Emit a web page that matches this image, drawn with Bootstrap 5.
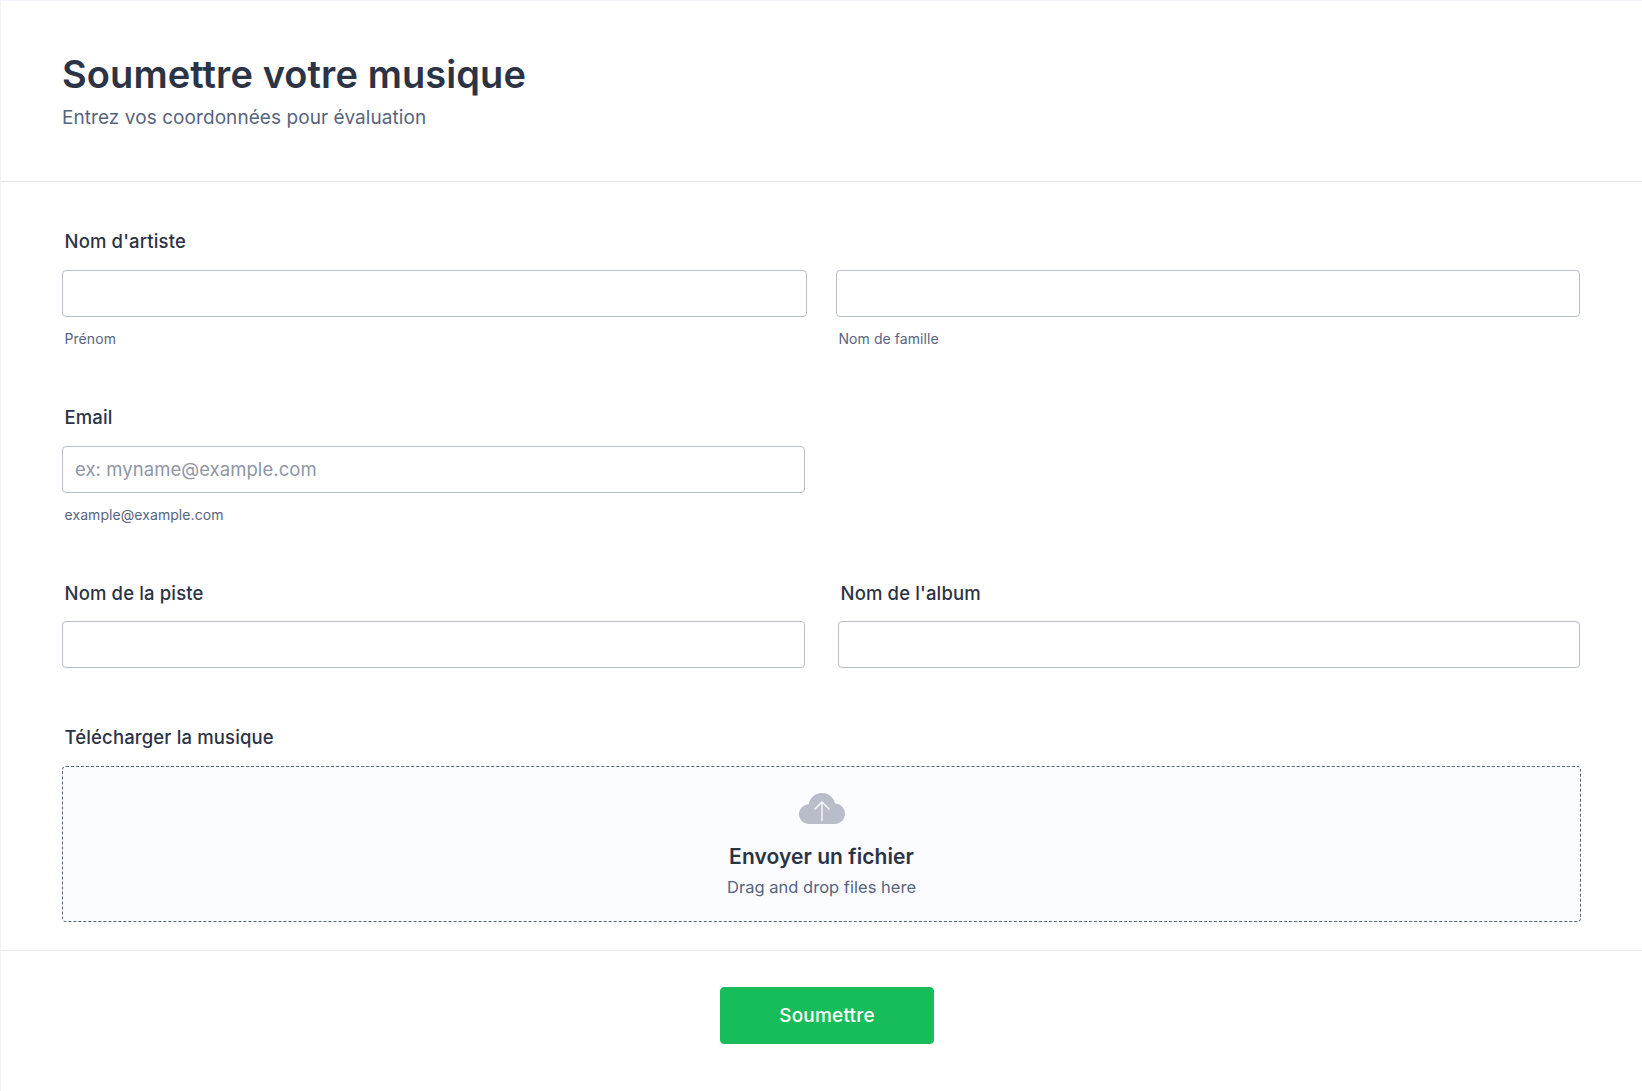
<!DOCTYPE html>
<html lang="fr">
<head>
<meta charset="utf-8">
<title>Soumettre votre musique</title>
<link href="https://cdn.jsdelivr.net/npm/bootstrap@5.3.0/dist/css/bootstrap.min.css" rel="stylesheet">
<style>
html,body{height:100%}
body{font-family:Inter,"Liberation Sans",sans-serif;color:#2c3345;background:#fff;font-optical-sizing:none}
.sheet{min-height:1091px;border-left:1px solid #f0f1f6;border-top:1px solid #f3f3fe;padding-top:0}
.head-block{height:181px;padding:49px 61px 0 61px;border-bottom:1px solid #dfe1ea}
.form-title{font-size:38px;line-height:48px;font-weight:600;letter-spacing:.09px;color:#2c3345;margin:0}
.form-sub{font-size:19px;line-height:24px;letter-spacing:.07px;color:#57647e;margin:8px 0 0}
.form-body{padding:0 61px;height:769px;border-bottom:1px solid #eaebf2}
.field-label{font-size:18.500px;line-height:24px;font-weight:450;letter-spacing:.14px;color:#2c3345;padding-left:2.500px;margin:0 0 17px}
.field-hint{font-size:14px;line-height:18px;letter-spacing:.07px;color:#57647e;padding-left:2.500px;margin:13px 0 0}
.text-field{display:block;width:100%;height:47px;border:1px solid #b8bdcc;border-radius:4px;padding:0 12px 2px;font-size:18.500px;letter-spacing:.06px;color:#2c3345;background:#fff;font-family:inherit;outline:none}
.text-field::placeholder{color:#8f96a6}
.first-group{padding-top:47px}
.email-group{padding-top:57px}
.music-group{padding-top:57px}
.music-group .field-label{margin-bottom:16px}
.upload-group{padding-top:57px}
.col-a1{width:745px}.col-b1{width:744px;margin-left:29px}
.col-a2{width:743px}.col-b2{width:742px;margin-left:33px}
.upload-zone{height:156px;border:1px dashed #57647e;border-radius:4px;background:#fbfcff;padding-top:26px}
.upload-zone svg{display:block}
.upload-title{font-size:21px;line-height:28px;font-weight:600;letter-spacing:.06px;color:#2c3345;margin:18px 0 0}
.upload-text{font-size:16.500px;line-height:22px;letter-spacing:.02px;color:#57647e;margin:5px 0 0}
.send-btn{width:214px;height:57px;background:#18bd5b;border:1px solid #18bd5b;border-radius:4px;color:#fff;font-size:19px;font-weight:450;letter-spacing:.2px;padding:2px 0 0}
.send-btn:hover{background:#18bd5b;border-color:#18bd5b;color:#fff}
.foot-block{padding:36px 0 0 719px}
</style>
</head>
<body>
<main class="sheet">
  <header class="head-block">
    <h1 class="form-title">Soumettre votre musique</h1>
    <p class="form-sub">Entrez vos coordonnées pour évaluation</p>
  </header>
  <form class="form-body" onsubmit="return false">
    <div class="first-group">
      <label class="field-label d-block">Nom d'artiste</label>
      <div class="d-flex">
        <div class="col-a1"><input class="text-field" type="text"><div class="field-hint">Prénom</div></div>
        <div class="col-b1"><input class="text-field" type="text"><div class="field-hint">Nom de famille</div></div>
      </div>
    </div>
    <div class="email-group">
      <label class="field-label d-block">Email</label>
      <div class="col-a2"><input class="text-field" type="email" placeholder="ex: myname@example.com"><div class="field-hint">example@example.com</div></div>
    </div>
    <div class="music-group d-flex">
      <div class="col-a2"><label class="field-label d-block">Nom de la piste</label><input class="text-field" type="text"></div>
      <div class="col-b2"><label class="field-label d-block">Nom de l'album</label><input class="text-field" type="text"></div>
    </div>
    <div class="upload-group">
      <label class="field-label d-block">Télécharger la musique</label>
      <div class="upload-zone text-center">
        <svg class="mx-auto" width="46" height="32" viewBox="0 0 46 32" aria-hidden="true">
          <path fill="#b8bdc9" d="M23 0c6.6 0 11.8 4.4 12.9 10.2C41.500 10.800 46 14.900 46 20.500 46 26.900 41.300 31 35.500 31H10.500C4.700 31 0 26.700 0 21.200 0 15.900 4.200 11.600 9.600 11.200 10.900 4.800 16.400 0 23 0Z"/>
          <path fill="none" stroke="#fbfcff" stroke-width="1.300" d="M23 28V9M15.500 16.500 23 9l7.500 7.500"/>
        </svg>
        <div class="upload-title">Envoyer un fichier</div>
        <div class="upload-text">Drag and drop files here</div>
      </div>
    </div>
  </form>
  <div class="foot-block">
    <button class="btn send-btn" type="submit">Soumettre</button>
  </div>
</main>
<script src="https://cdn.jsdelivr.net/npm/bootstrap@5.3.0/dist/js/bootstrap.bundle.min.js"></script>
</body>
</html>
